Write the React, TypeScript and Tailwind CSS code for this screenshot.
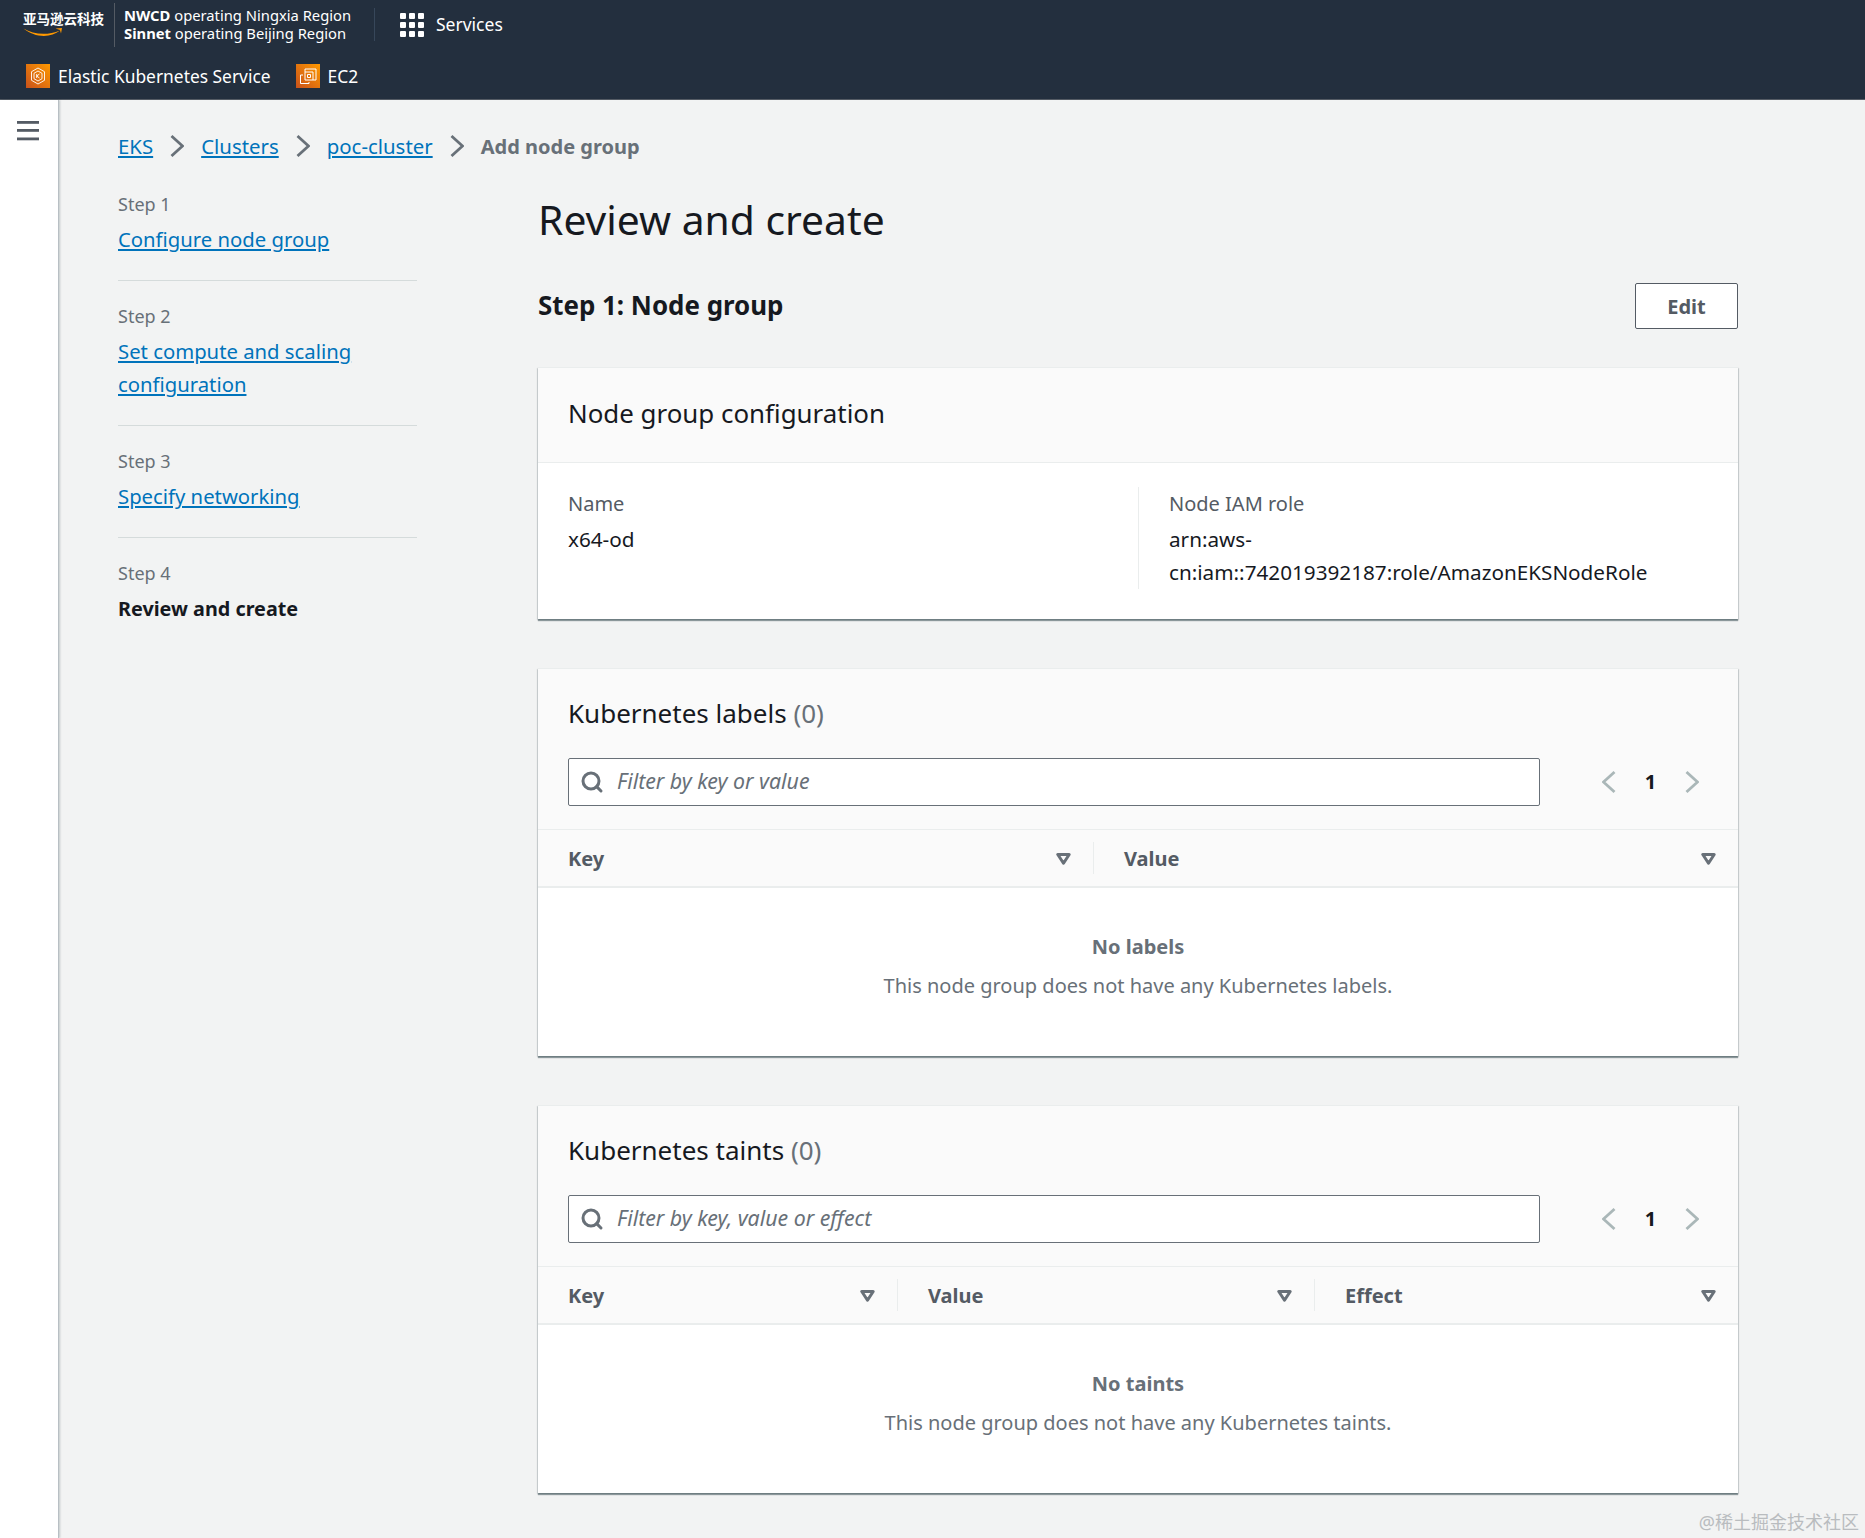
import { Search } from 'lucide-react'

const sans = { fontFamily: '"Noto Sans", "Noto Sans CJK SC", sans-serif' }

const steps = [
  { label: 'Step 1', lines: ['Configure node group'] },
  { label: 'Step 2', lines: ['Set compute and scaling', 'configuration'] },
  { label: 'Step 3', lines: ['Specify networking'] },
  { label: 'Step 4', lines: ['Review and create'], current: true },
]

function GridIcon() {
  const spots = [0, 9, 18]
  return (
    <svg width="24" height="24" viewBox="0 0 24 24" fill="#fff">
      {spots.map((y) =>
        spots.map((x) => <rect key={`${x}-${y}`} x={x} y={y} width="6" height="6" rx="1" />),
      )}
    </svg>
  )
}

function EksIcon() {
  return (
    <svg width="24" height="24" viewBox="0 0 24 24">
      <defs>
        <linearGradient id="eks-bg" x1="0" y1="1" x2="1" y2="0">
          <stop offset="0" stopColor="#c8511b" />
          <stop offset="1" stopColor="#ff9900" />
        </linearGradient>
      </defs>
      <rect width="24" height="24" fill="url(#eks-bg)" />
      <g fill="none" stroke="#fff" strokeWidth="0.9">
        <path d="M12 4l6.500 3.700v8.600L12 20l-6.500-3.700V7.700z" />
        <path d="M12 7l4 2.300v5.400L12 17l-4-2.300V9.300z" />
        <path d="M10.700 10v4M13.500 10l-2.800 2 2.800 2" />
      </g>
    </svg>
  )
}

function Ec2Icon() {
  return (
    <svg width="24" height="24" viewBox="0 0 24 24">
      <defs>
        <linearGradient id="ec2-bg" x1="0" y1="1" x2="1" y2="0">
          <stop offset="0" stopColor="#c8511b" />
          <stop offset="1" stopColor="#ff9900" />
        </linearGradient>
      </defs>
      <rect width="24" height="24" fill="url(#ec2-bg)" />
      <g fill="none" stroke="#fff" strokeWidth="1">
        <path d="M9 8V5h11v11h-3" />
        <path d="M9 8h8v8H9z" />
        <path d="M11.500 10.500h3v3h-3z" />
        <path d="M7 11H4.500v8.500H13V18" />
      </g>
    </svg>
  )
}

function Crumb({ children }: { children: string }) {
  return <a className="text-[20.400px] text-[#0073bb] underline underline-offset-2">{children}</a>
}

function CrumbArrow() {
  return (
    <svg width="14" height="24" viewBox="0 0 14 24" className="mx-[17px]" fill="none" stroke="#687078" strokeWidth="2.800">
      <path d="M1.500 2l11 10-11 10" />
    </svg>
  )
}

function FilterMark() {
  return (
    <svg width="15" height="12" viewBox="0 0 15 12" className="mt-[2px]" fill="none" stroke="#687078" strokeWidth="3" strokeLinejoin="round">
      <path d="M1.800 1.500h11.400L7.500 10.200z" />
    </svg>
  )
}

function Pager() {
  return (
    <div className="ml-[62px] flex items-center">
      <svg width="14" height="24" viewBox="0 0 14 24" fill="none" stroke="#aab7b8" strokeWidth="2.800">
        <path d="M12.500 2l-11 10 11 10" />
      </svg>
      <span className="mb-[2px] w-[69px] text-center font-bold text-[#16191f]">1</span>
      <svg width="14" height="24" viewBox="0 0 14 24" fill="none" stroke="#aab7b8" strokeWidth="2.800">
        <path d="M1.500 2l11 10-11 10" />
      </svg>
    </div>
  )
}

function TableCard({
  title,
  placeholder,
  columns,
  emptyTitle,
  emptyText,
}: {
  title: string
  placeholder: string
  columns: { name: string; width: string }[]
  emptyTitle: string
  emptyText: string
}) {
  return (
    <section className="mt-[49px] flex h-[388px] flex-col border-t border-[#eaeded] bg-white shadow-[0_2px_1px_0_rgba(0,28,36,0.4),1px_1px_1px_0_rgba(0,28,36,0.12),-1px_1px_1px_0_rgba(0,28,36,0.12)]">
      <div className="border-b border-[#eaeded] bg-[#fafafa] px-[30px] pt-[27px] pb-[23px]">
        <h3 className="text-[26px] leading-[35px] text-[#16191f]">
          {title} <span className="text-[#687078]">(0)</span>
        </h3>
        <div className="mt-[27px] flex items-center">
          <div className="relative w-[972px]">
            <Search className="absolute top-[12px] left-[12px] text-[#687078]" size={24} strokeWidth={3} />
            <input
              readOnly
              placeholder={placeholder}
              className="block h-[48px] w-full rounded-[2px] border border-[#687078] bg-white pb-[4px] pl-[48px] text-[21.300px] text-[#16191f] outline-none placeholder:text-[#687078] placeholder:italic"
            />
          </div>
          <Pager />
        </div>
      </div>
      <div className="flex h-[58px] items-center border-b-2 border-[#eaeded] bg-[#fafafa]">
        {columns.map((col, i) => (
          <div key={col.name} className={`flex h-[32px] items-center justify-between ${col.width} ${i > 0 ? 'border-l border-[#eaeded] pl-[30px]' : 'pl-[30px]'} pr-[22px]`}>
            <span className="font-bold text-[#545b64]">{col.name}</span>
            <FilterMark />
          </div>
        ))}
      </div>
      <div className="pt-[42px] text-center text-[#687078]">
        <div className="font-bold">{emptyTitle}</div>
        <div className="mt-[6px]">{emptyText}</div>
      </div>
    </section>
  )
}

export default function App() {
  return (
    <div style={sans} className="relative min-h-[1538px] overflow-hidden bg-[#f2f3f3] text-[20px] leading-[33px] text-[#16191f]">
      <header className="h-[100px] border-b border-[#545b64] bg-[#232f3e] text-white">
        <div className="flex h-[49px] items-center">
          <div className="ml-[23px] flex w-[91px] flex-col">
            <span className="text-[13.500px] leading-[16px] font-bold">亚马逊云科技</span>
            <svg width="42" height="11" viewBox="0 0 42 11" fill="#ff9900">
              <path d="M0.500 1.500C11 8 25 8.500 37 3.500c-9 7.500-25 7.500-36.500-2z" />
              <path d="M32.500 1.500l6.500-0.500-1 5.500-1-3.500z" />
            </svg>
          </div>
          <div className="h-[44px] w-px bg-[#545b64]" />
          <div className="ml-[9px] w-[250px] text-[14.750px] leading-[17.500px]">
            <div><b>NWCD</b> operating Ningxia Region</div>
            <div><b>Sinnet</b> operating Beijing Region</div>
          </div>
          <div className="h-[33px] w-px bg-[#37475a]" />
          <div className="ml-[25px]"><GridIcon /></div>
          <span className="ml-[12px] text-[17.500px]">Services</span>
        </div>
        <div className="flex h-[54px] items-center pl-[26px] text-[17.400px]">
          <EksIcon />
          <span className="ml-[8px]">Elastic Kubernetes Service</span>
          <div className="ml-[25px]"><Ec2Icon /></div>
          <span className="ml-[8px]">EC2</span>
        </div>
      </header>

      <div className="flex">
        <aside className="min-h-[1438px] w-[59px] shrink-0 border-r border-[#b8bfc4] bg-white pt-[21px] shadow-[1px_0_2px_rgba(0,28,36,0.2)]">
          <svg width="22" height="20" viewBox="0 0 22 20" className="ml-[17px]" fill="#545b64">
            <rect y="0" width="22" height="2.800" />
            <rect y="8" width="22" height="2.800" />
            <rect y="16.500" width="22" height="2.800" />
          </svg>
        </aside>

        <main className="box-content w-[1200px] pt-[34px] pl-[59px]">
          <nav className="flex h-[24px] items-center">
            <Crumb>EKS</Crumb>
            <CrumbArrow />
            <Crumb>Clusters</Crumb>
            <CrumbArrow />
            <Crumb>poc-cluster</Crumb>
            <CrumbArrow />
            <span className="font-bold text-[#687078]">Add node group</span>
          </nav>

          <div className="mt-[35px] flex">
            <ol className="w-[299px] shrink-0">
              {steps.map((step, i) => (
                <li key={step.label} className={i < steps.length - 1 ? 'mb-[24px] border-b border-[#d5dbdb] pb-[24px]' : ''}>
                  <div className="h-[24px] text-[18px] leading-[22px] text-[#687078]">{step.label}</div>
                  <div className="mt-[6px]">
                    {step.current ? (
                      <span className="text-[19.800px] font-bold">{step.lines[0]}</span>
                    ) : (
                      <a className="text-[20.300px] text-[#0073bb] underline underline-offset-2">
                        {step.lines.map((line) => (
                          <div key={line}>{line}</div>
                        ))}
                      </a>
                    )}
                  </div>
                </li>
              ))}
            </ol>

            <div className="ml-[121px] w-[1200px] shrink-0">
              <h1 className="mt-[3px] h-[46px] text-[40.800px] leading-[46px]">Review and create</h1>

              <div className="mt-[41px] flex h-[46px] items-center justify-between">
                <h2 className="mb-[2px] text-[25.900px] font-bold">Step 1: Node group</h2>
                <button className="h-[46px] w-[103px] rounded-[2px] border border-[#545b64] bg-white font-bold text-[#545b64]">Edit</button>
              </div>

              <section className="mt-[38px] h-[252px] border-t border-[#eaeded] bg-white shadow-[0_2px_1px_0_rgba(0,28,36,0.4),1px_1px_1px_0_rgba(0,28,36,0.12),-1px_1px_1px_0_rgba(0,28,36,0.12)]">
                <div className="flex h-[95px] items-center border-b border-[#eaeded] bg-[#fafafa] px-[30px]">
                  <h3 className="mb-[4px] text-[25.900px]">Node group configuration</h3>
                </div>
                <div className="grid grid-cols-2 px-[30px] pt-[24px]">
                  <div>
                    <div className="text-[#545b64]">Name</div>
                    <div className="mt-[3px] text-[20.700px]">x64-od</div>
                  </div>
                  <div className="border-l border-[#eaeded] pl-[30px]">
                    <div className="text-[#545b64]">Node IAM role</div>
                    <div className="mt-[3px] text-[20.700px]">arn:aws-<br />cn:iam::742019392187:role/AmazonEKSNodeRole</div>
                  </div>
                </div>
              </section>

              <TableCard
                title="Kubernetes labels"
                placeholder="Filter by key or value"
                columns={[
                  { name: 'Key', width: 'w-[555px]' },
                  { name: 'Value', width: 'w-[645px]' },
                ]}
                emptyTitle="No labels"
                emptyText="This node group does not have any Kubernetes labels."
              />

              <TableCard
                title="Kubernetes taints"
                placeholder="Filter by key, value or effect"
                columns={[
                  { name: 'Key', width: 'w-[359px]' },
                  { name: 'Value', width: 'w-[417px]' },
                  { name: 'Effect', width: 'w-[424px]' },
                ]}
                emptyTitle="No taints"
                emptyText="This node group does not have any Kubernetes taints."
              />
            </div>
          </div>
        </main>
      </div>

      <div className="absolute right-[6px] bottom-[4px] text-[18px] leading-[24px] text-[#b9bcbf]">@稀土掘金技术社区</div>
    </div>
  )
}
